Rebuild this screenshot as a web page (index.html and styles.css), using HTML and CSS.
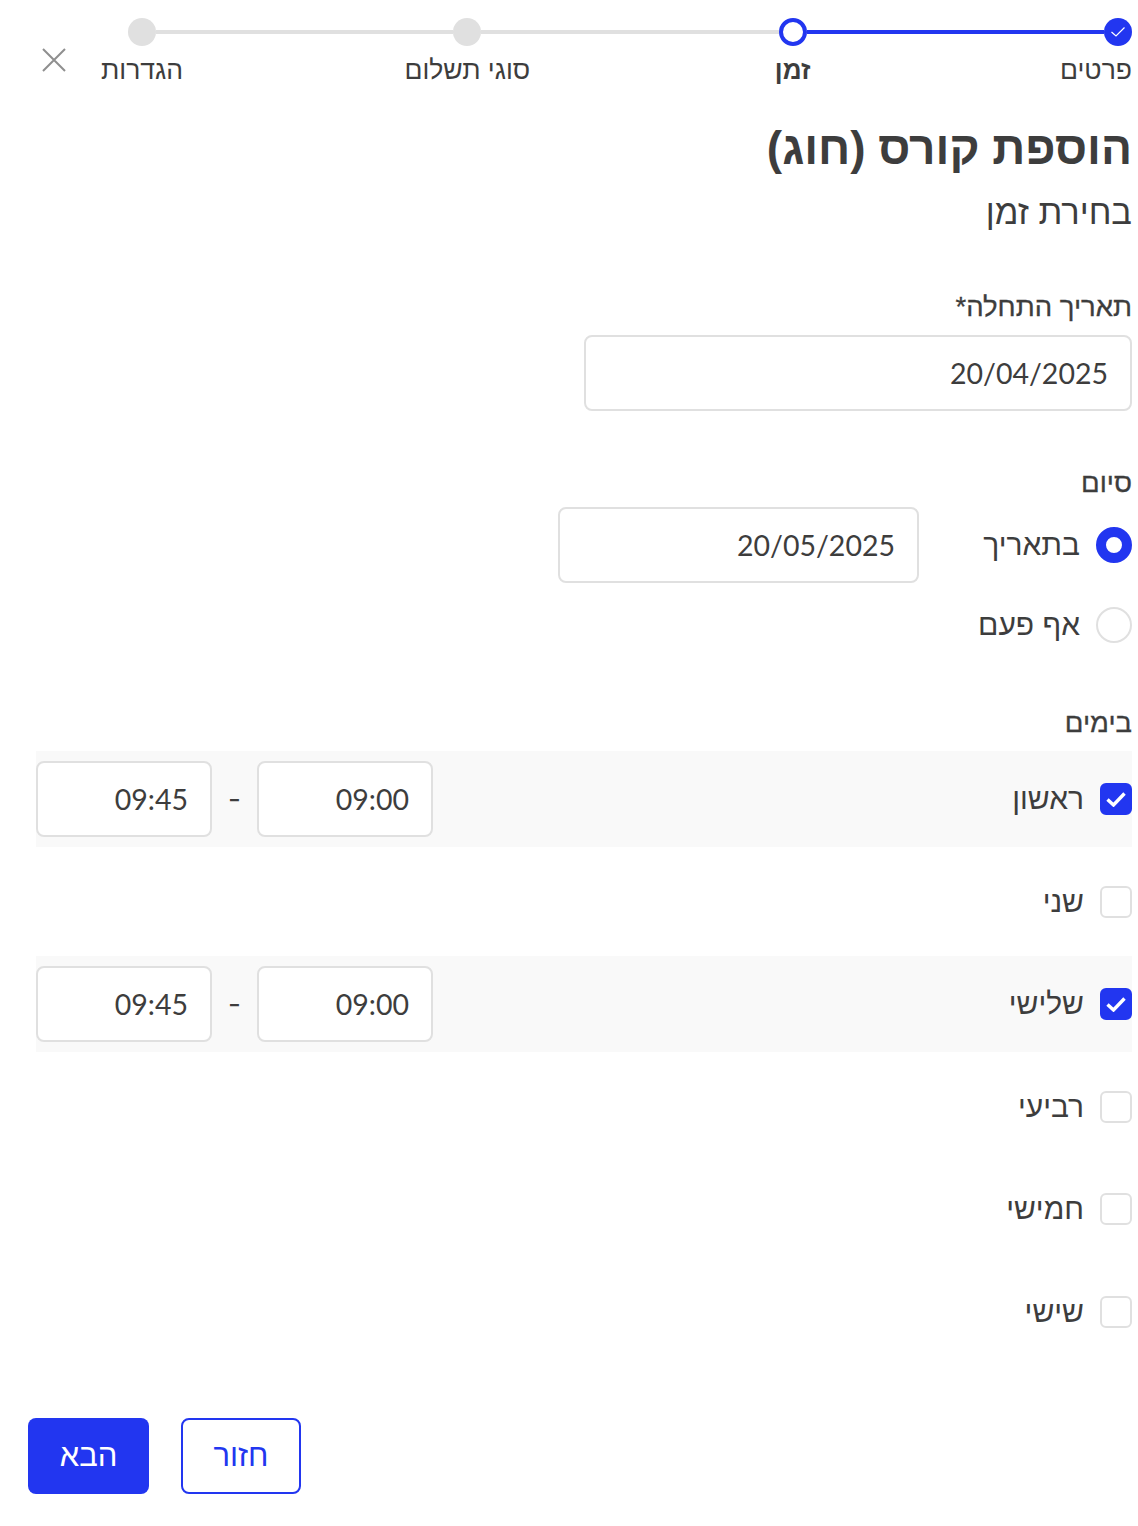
FILE: index.html
```html
<!DOCTYPE html>
<html lang="he" dir="rtl">
<head>
<meta charset="utf-8">
<title>הוספת קורס (חוג)</title>
<link rel="stylesheet" href="styles.css">
</head>
<body>
<main class="page">
  <button class="close" aria-label="סגור">
    <svg width="26" height="26" viewBox="0 0 26 26"><path d="M2 2 L24 24 M24 2 L2 24" stroke="#8f8f8f" stroke-width="2" fill="none"/></svg>
  </button>
  <nav class="stepper">
    <div class="step first">
      <span class="dot done"><svg width="16" height="12" viewBox="0 0 16 12"><path d="M1.5 6 L6 10 L14.5 1.5" stroke="#fff" stroke-width="1.2" fill="none"/></svg></span>
      <span class="step-label">פרטים</span>
    </div>
    <span class="line active"></span>
    <div class="step">
      <span class="dot current"></span>
      <span class="step-label strong">זמן</span>
    </div>
    <span class="line"></span>
    <div class="step">
      <span class="dot"></span>
      <span class="step-label">סוגי תשלום</span>
    </div>
    <span class="line"></span>
    <div class="step">
      <span class="dot"></span>
      <span class="step-label">הגדרות</span>
    </div>
  </nav>

  <h1 class="title">הוספת קורס (חוג)</h1>
  <h2 class="subtitle">בחירת זמן</h2>

  <label class="field-label start-label">תאריך התחלה*</label>
  <div class="input date-wide">20/04/2025</div>

  <label class="field-label end-label">סיום</label>
  <div class="end-row">
    <span class="radio on"></span>
    <span class="option-text">בתאריך</span>
    <div class="input date-end">20/05/2025</div>
  </div>
  <div class="end-row never">
    <span class="radio"></span>
    <span class="option-text">אף פעם</span>
  </div>

  <label class="field-label days-label">בימים</label>
  <div class="days">
    <div class="day on">
      <span class="check on"><svg width="20" height="16" viewBox="0 0 20 16"><path d="M1.5 8.5 L7.5 14 L18.5 2.5" stroke="#fff" stroke-width="3.4" fill="none"/></svg></span>
      <span class="day-name">ראשון</span>
      <div class="times"><div class="input time">09:00</div><span class="dash">-</span><div class="input time">09:45</div></div>
    </div>
    <div class="day"><span class="check"></span><span class="day-name">שני</span></div>
    <div class="day on">
      <span class="check on"><svg width="20" height="16" viewBox="0 0 20 16"><path d="M1.5 8.5 L7.5 14 L18.5 2.5" stroke="#fff" stroke-width="3.4" fill="none"/></svg></span>
      <span class="day-name">שלישי</span>
      <div class="times"><div class="input time">09:00</div><span class="dash">-</span><div class="input time">09:45</div></div>
    </div>
    <div class="day"><span class="check"></span><span class="day-name">רביעי</span></div>
    <div class="day"><span class="check"></span><span class="day-name">חמישי</span></div>
    <div class="day"><span class="check"></span><span class="day-name">שישי</span></div>
  </div>

  <footer class="actions">
    <button class="btn ghost">חזור</button>
    <button class="btn primary">הבא</button>
  </footer>
</main>
</body>
</html>
```
FILE: styles.css
```css
* { box-sizing: border-box; }
html, body { margin: 0; background: #fff; }
body { font-family: "Liberation Sans", sans-serif; color: #3d3d3d; }
.page { position: relative; width: 1138px; height: 1526px; padding: 18px 6px 0 36px; }
.close { position: absolute; left: 41px; top: 47px; width: 26px; height: 26px; padding: 0; border: 0; background: none; display: block; }
.close svg { display: block; }

.stepper { display: flex; align-items: flex-start; margin-left: 92px; height: 84px; }
.step { width: 28px; display: flex; flex-direction: column; align-items: center; flex: none; }
.step.first { align-items: flex-start; }
.dot { width: 28px; height: 28px; border-radius: 50%; background: #e0e0e0; display: flex; align-items: center; justify-content: center; flex: none; }
.dot.done { background: #2236f0; }
.dot.current { background: #fff; border: 4px solid #2236f0; }
.line { flex: 1; height: 4px; margin-top: 12px; background: #e0e0e0; }
.line.active { background: #2236f0; }
.step-label { margin-top: 8px; font-size: 26.5px; line-height: 32px; white-space: nowrap; }
.step-label.strong { font-weight: 700; font-size: 26px; }

.title { margin: 18px 0 0; font-size: 46px; line-height: 56px; font-weight: 700; }
.subtitle { margin: 16px 0 0; font-size: 34.5px; line-height: 40px; font-weight: 400; }

.field-label { display: block; font-size: 27.5px; line-height: 32px; -webkit-text-stroke: 0.3px #3d3d3d; }
.start-label { margin-top: 59px; }
.end-label { margin-top: 56px; }
.days-label { margin-top: 64px; }

.input { height: 76px; border: 2px solid #e0e0e0; border-radius: 8px; background: #fff; padding: 0 22px; font-family: "Lato", sans-serif; font-size: 28.5px; line-height: 72px; text-align: right; }
.date-wide { width: 548px; margin-top: 12px; }
.date-end { width: 361px; margin-right: 55px; }

.end-row { display: flex; align-items: center; height: 76px; margin-top: 8px; }
.end-row.never { height: 36px; margin-top: 24px; }
.radio { width: 36px; height: 36px; border-radius: 50%; border: 2px solid #e0e0e0; background: #fff; flex: none; }
.radio.on { border: 10px solid #2236f0; }
.option-text { margin-right: 16px; font-size: 30px; line-height: 36px; width: 106px; }

.days { display: flex; flex-direction: column; gap: 6.5px; margin-top: 12px; }
.day { display: flex; align-items: center; height: 96px; }
.day.on { background: #f9f9f9; }
.check { width: 32px; height: 32px; border-radius: 6px; border: 2px solid #e0e0e0; background: #fff; flex: none; display: flex; align-items: center; justify-content: center; }
.check.on { background: #2236f0; border-color: #2236f0; }
.day-name { margin-right: 16px; font-size: 30px; line-height: 36px; }
.times { display: flex; align-items: center; margin-right: auto; }
.time { width: 176px; padding-right: 22px; padding-left: 0; }
.dash { width: 45px; text-align: center; font-size: 28px; font-family: "Inter", sans-serif; }

.actions { display: flex; justify-content: flex-end; gap: 32px; margin-top: 58px; margin-left: -8px; }
.btn { height: 76px; border-radius: 8px; font-family: inherit; font-size: 31px; padding: 0; }
.primary { width: 121px; background: #2236f0; border: 0; color: #fff; }
.ghost { width: 120px; background: #fff; border: 2px solid #2236f0; color: #2236f0; }
```
